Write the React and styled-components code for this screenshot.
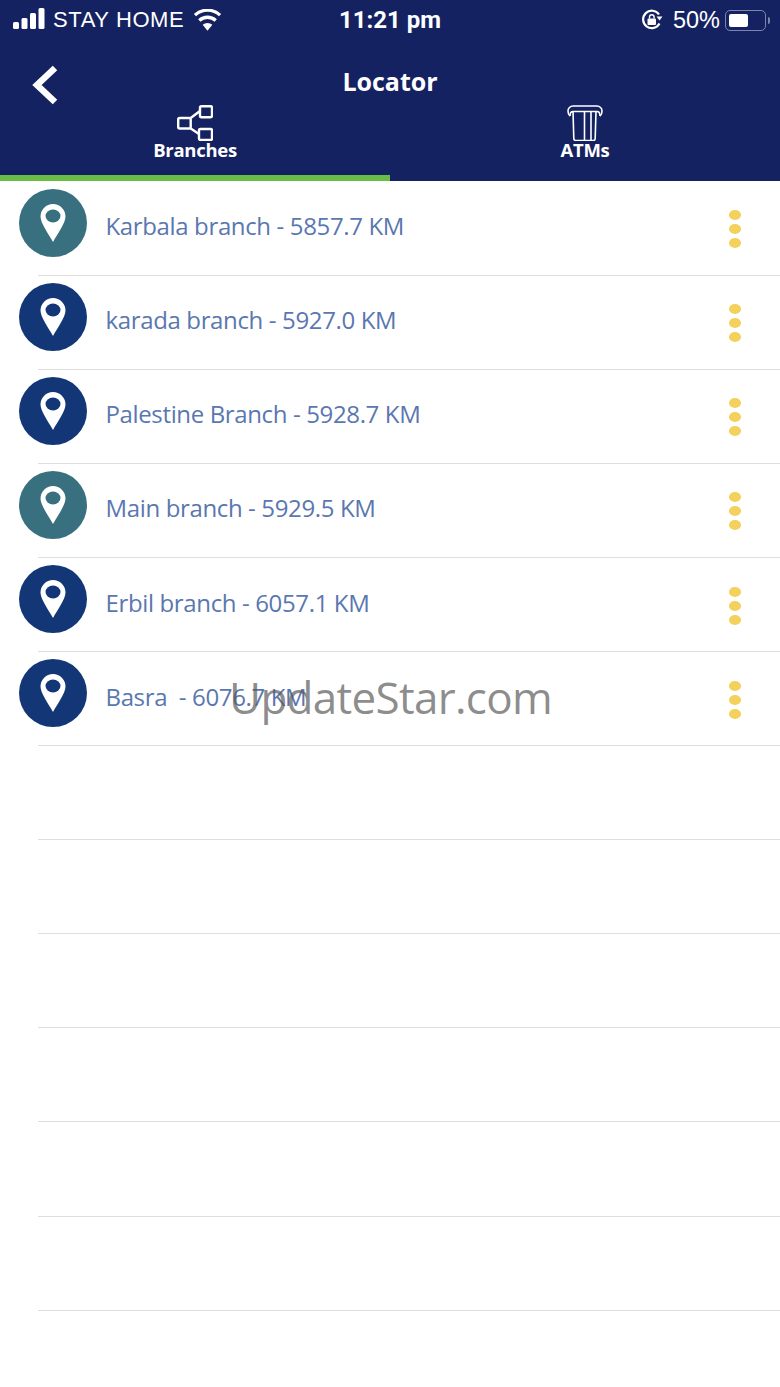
import React from "react";
import styled, { createGlobalStyle } from "styled-components";

const branches = [
  { name: "Karbala branch - 5857.7 KM", tone: "#38707f" },
  { name: "karada branch - 5927.0 KM", tone: "#133776" },
  { name: "Palestine Branch - 5928.7 KM", tone: "#133776" },
  { name: "Main branch - 5929.5 KM", tone: "#38707f" },
  { name: "Erbil branch - 6057.1 KM", tone: "#133776" },
  { name: "Basra\u00a0 - 6076.7 KM", tone: "#133776" },
];

const App = () => {
  return (
    <Page>
      <GlobalStyle />
      <Header>
        <StatusBar>
          <StatusLeft>
            <Signal width="33" height="22" viewBox="0 0 33 22">
              <rect x="0" y="14" width="6" height="7" rx="1.5" />
              <rect x="8.500" y="10" width="6" height="11" rx="1.5" />
              <rect x="17" y="5" width="6" height="16" rx="1.5" />
              <rect x="25.500" y="0" width="6" height="21" rx="1.5" />
            </Signal>
            <Carrier>STAY HOME</Carrier>
            <svg width="29" height="22" viewBox="0 0 30 22">
              <path d="M15 22l-5-6a7.5 7.5 0 0 1 10 0z" fill="#fff" />
              <path d="M6.5 11.5a12.5 12.5 0 0 1 17 0M2 6a19 19 0 0 1 26 0" fill="none" stroke="#fff" strokeWidth="3.4" />
            </svg>
          </StatusLeft>
          <Clock>11:21 pm</Clock>
          <StatusRight>
            <svg width="22" height="22" viewBox="0 0 22 22">
              <path d="M18.5 14.5A8.7 8.7 0 1 1 18 5.5" fill="none" stroke="#fff" strokeWidth="2.2" />
              <path d="M15.5 7.5h6l-3 4z" fill="#fff" />
              <rect x="6.500" y="9.5" width="8.500" height="6.5" rx="1" fill="#fff" />
              <path d="M8.500 9.5V8a2.300 2.300 0 0 1 4.600 0v1.500" fill="none" stroke="#fff" strokeWidth="1.4" />
            </svg>
            <Percent>50%</Percent>
            <Battery>
              <BatteryFill />
            </Battery>
            <BatteryTip />
          </StatusRight>
        </StatusBar>
        <TitleRow>
          <BackButton>
            <svg width="28" height="40" viewBox="0 0 28 40">
              <path d="M24 3L6 20l18 17" fill="none" stroke="#fff" strokeWidth="6.5" />
            </svg>
          </BackButton>
          <Title>Locator</Title>
        </TitleRow>
        <Tabs>
          <Tab $active>
            <svg width="36" height="36" viewBox="0 0 36 36">
              <g fill="none" stroke="#fff" strokeWidth="2.4">
                <rect x="1.200" y="13" width="12.500" height="10.500" rx="1.500" />
                <rect x="23" y="1.200" width="12" height="11" rx="1.500" />
                <rect x="22" y="24" width="13" height="11" rx="1.500" />
                <path d="M13.700 13L23 6M13.700 23.500L22 29" />
              </g>
            </svg>
            <TabLabel>Branches</TabLabel>
          </Tab>
          <Tab>
            <svg width="36" height="36" viewBox="0 0 36 36">
              <g fill="none" stroke="#fff" strokeWidth="1.600">
                <path d="M3 11C1.500 10 1 8 1 6a5 5 0 0 1 5-5h24a5 5 0 0 1 5 5c0 2-.5 4-2 5" />
                <path d="M3 11C3 8 4 6.500 6 6.500h24c2 0 3 1.500 3 4.500" />
                <path d="M6 6.500l.8 27a2 2 0 0 0 2 2h17.400a2 2 0 0 0 2-2l.8-27" />
                <path d="M17.500 6.500v29M24 6.500v29" />
              </g>
            </svg>
            <TabLabel>ATMs</TabLabel>
          </Tab>
        </Tabs>
      </Header>
      <List>
        {branches.map((branch) => (
          <Row key={branch.name}>
            <Badge $tone={branch.tone}>
              <svg width="26" height="38" viewBox="0 0 26 38">
                <path d="M13 0a12.500 12.500 0 0 1 12.500 12.500C25.500 19 18 29 13 38 8 29 .5 19 .5 12.500A12.500 12.500 0 0 1 13 0z" fill="#fff" />
                <ellipse cx="13" cy="12" rx="7.500" ry="6.500" fill={branch.tone} />
              </svg>
            </Badge>
            <BranchName>{branch.name}</BranchName>
            <Dots>
              <Dot />
              <Dot />
              <Dot />
            </Dots>
          </Row>
        ))}
        {Array.from({ length: 6 }, (_, i) => (
          <Row key={i} />
        ))}
      </List>
      <Watermark>UpdateStar.com</Watermark>
    </Page>
  );
};

export default App;

const GlobalStyle = createGlobalStyle`
  html, body {
    margin: 0;
    padding: 0;
    background: #fff;
  }
`;

const Page = styled.div`
  position: relative;
  width: 780px;
  height: 1387px;
  overflow: hidden;
  background: #fff;
  font-family: "Open Sans", "Noto Sans", sans-serif;
`;

const Header = styled.header`
  height: 181px;
  background: #152261;
  color: #fff;
`;

const StatusBar = styled.div`
  display: grid;
  grid-template-columns: 1fr auto 1fr;
  align-items: center;
  height: 40px;
  padding: 0 13px;
`;

const StatusLeft = styled.div`
  display: flex;
  align-items: center;
  gap: 7px;
`;

const Signal = styled.svg`
  fill: #fff;
  margin-top: -2px;
`;

const Carrier = styled.span`
  font-family: "Liberation Sans", sans-serif;
  font-size: 22px;
  letter-spacing: 0.6px;
  margin-right: 2px;
`;

const Clock = styled.span`
  font-family: Roboto, sans-serif;
  font-size: 24px;
  font-weight: 700;
`;

const StatusRight = styled.div`
  display: flex;
  align-items: center;
  justify-content: flex-end;
  margin-right: -3px;
`;

const Percent = styled.span`
  font-family: "Liberation Sans", sans-serif;
  font-size: 23.500px;
  margin: 0 5px 0 10px;
`;

const Battery = styled.div`
  box-sizing: border-box;
  width: 41px;
  height: 21px;
  padding: 3px;
  border: 1.500px solid #7c84ae;
  border-radius: 5px;
`;

const BatteryFill = styled.div`
  width: 19px;
  height: 100%;
  border-radius: 2px;
  background: #fff;
`;

const BatteryTip = styled.div`
  width: 2px;
  height: 7px;
  margin-left: 2px;
  border-radius: 0 2px 2px 0;
  background: #7c84ae;
`;

const TitleRow = styled.div`
  position: relative;
  display: flex;
  justify-content: center;
  height: 64px;
`;

const BackButton = styled.div`
  position: absolute;
  left: 31px;
  top: 25px;
`;

const Title = styled.h1`
  margin: 0;
  padding-top: 24px;
  font-size: 25px;
  line-height: 34px;
  font-weight: 700;
`;

const Tabs = styled.nav`
  display: grid;
  grid-template-columns: 1fr 1fr;
  height: 77px;
`;

const Tab = styled.div`
  display: flex;
  flex-direction: column;
  align-items: center;
  box-sizing: border-box;
  padding-top: 1px;
  border-bottom: 6px solid ${(props) => (props.$active ? "#69bd45" : "transparent")};
`;

const TabLabel = styled.span`
  margin-top: -4px;
  font-size: 18.500px;
  line-height: 25px;
  font-weight: 700;
  letter-spacing: -0.3px;
`;

const List = styled.div`
  display: flex;
  flex-direction: column;
  padding-top: 0.7px;
`;

const Row = styled.div`
  position: relative;
  display: flex;
  align-items: center;
  box-sizing: border-box;
  height: 94.08px;
  padding: 0 39px 12px 19px;

  &::after {
    content: "";
    position: absolute;
    left: 38px;
    right: 0;
    bottom: 0;
    height: 1px;
    background: #dedede;
  }
`;

const Badge = styled.div`
  display: flex;
  align-items: center;
  justify-content: center;
  flex: none;
  width: 68px;
  height: 68px;
  border-radius: 50%;
  background: ${(props) => props.$tone};
`;

const BranchName = styled.span`
  flex: 1;
  margin: 6px 0 0 18.500px;
  font-size: 24px;
  letter-spacing: -0.36px;
  color: #5a77b0;
`;

const Dots = styled.div`
  display: flex;
  flex-direction: column;
  gap: 4px;
  margin-top: 13px;
`;

const Dot = styled.span`
  width: 12.500px;
  height: 10px;
  border-radius: 50%;
  background: #f3d15c;
`;

const Watermark = styled.div`
  position: absolute;
  left: 229px;
  top: 667px;
  font-size: 44px;
  line-height: 60px;
  letter-spacing: -0.7px;
  color: rgba(90, 90, 90, 0.7);
`;
